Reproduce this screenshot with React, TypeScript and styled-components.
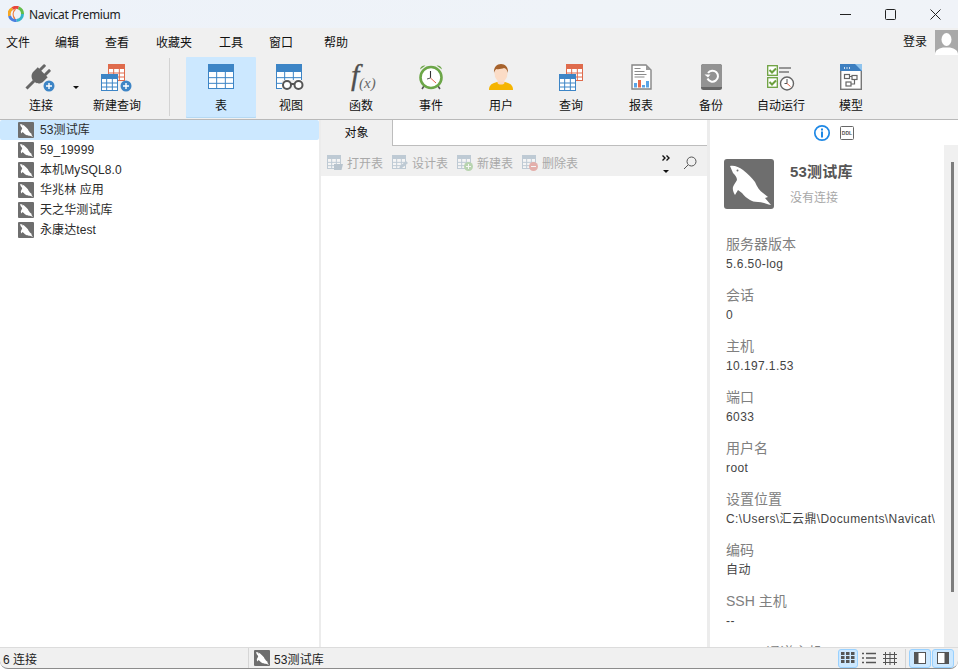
import React from "react";
import styled, { createGlobalStyle } from "styled-components";

const Global = createGlobalStyle`
  html, body { margin: 0; padding: 0; background: #fff; }
  body { font-family: "Liberation Sans", "Noto Sans CJK SC", sans-serif; font-size: 12px; color: #222; }
  * { box-sizing: border-box; }
`;
const cjk = `"Liberation Sans", "Noto Sans CJK SC", sans-serif`;

const Window = styled.div`
  width: 958px; height: 670px; display: flex; flex-direction: column; overflow: hidden;
  background: #fff; font-family: ${cjk}; padding-bottom: 1px;
`;
const TitleBar = styled.div`
  height: 28px; flex: none; display: flex; align-items: center; padding-left: 8px;
  background: linear-gradient(90deg, #edf2f9, #eff3f8 60%, #f0f3f8);
`;
const TitleText = styled.span`
  margin-left: 5px; font: 12px "Noto Sans", sans-serif; color: #222; letter-spacing: -0.35px;
`;
const WinControls = styled.div`
  margin-left: auto; display: flex; height: 28px;
`;
const WinBtn = styled.div`
  width: 45px; display: flex; align-items: center; justify-content: center;
`;
const MenuBar = styled.div`
  height: 27px; flex: none; display: flex; align-items: center; background: #f0f0f0; padding-left: 6px; position: relative;
`;
const MenuItem = styled.span<{ $w: number }>`
  width: ${p => p.$w}px; font-size: 12px; line-height: 16px; padding-top: 2px; color: #111; flex: none;
`;
const Login = styled.span`
  margin-left: auto; margin-right: 8px; font-size: 12px; line-height: 16px; color: #111;
`;
const Avatar = styled.div`
  width: 23px; height: 25px; margin-top: 2px; background: #a9a9a9; overflow: hidden; flex: none;
`;
const Toolbar = styled.div`
  height: 65px; flex: none; display: flex; align-items: stretch; padding: 2px 0 1px 6px; background: #f0f0f0;
  border-bottom: 1px solid #b9b9b9;
`;
const ToolBtn = styled.div<{ $active?: boolean }>`
  width: 70px; flex: none; display: flex; flex-direction: column; align-items: center;
  padding-top: 7px; font-size: 12px; color: #111;
  background: ${p => (p.$active ? "#cce8ff" : "transparent")};
  border-radius: 1px;
  box-shadow: ${p => (p.$active ? "inset 0 -1px 0 #b5d9f3" : "none")};
`;
const ToolIcon = styled.div`
  height: 30px; display: flex; align-items: flex-start; justify-content: center;
`;
const ToolLabel = styled.span`
  margin-top: 4px; line-height: 16px; white-space: nowrap;
`;
const Caret = styled.div`
  width: 6px; flex: none; display: flex; align-items: center; justify-content: center; padding-top: 0;
  margin-left: -3px; margin-right: 3px;
  &::after { content: ""; border: 3px solid transparent; border-top: 3px solid #111; border-bottom: 0; }
`;
const ToolSep = styled.div`
  width: 1px; background: #d3d3d3; margin: 1px 16px 2px 17px; flex: none;
`;
const Main = styled.div`
  flex: 1; min-height: 0; display: flex; background: #fff;
`;
const TreePane = styled.div`
  width: 319px; flex: none; background: #fff; padding: 0;
`;
const TreeRow = styled.div<{ $sel?: boolean }>`
  height: 20px; display: flex; align-items: center; padding-left: 18px; gap: 6px;
  font-size: 12px; line-height: 16px; color: #2b2b2b; border-radius: 2px; letter-spacing: .1px;
  background: ${p => (p.$sel ? "#cce8ff" : "transparent")};
`;
const TreeText = styled.span`
  margin-top: -1px;
`;
const Splitter = styled.div`
  width: 2px; flex: none; background: #ececec;
`;
const Middle = styled.div`
  width: 386px; flex: none; display: flex; flex-direction: column; background: #fff;
`;
const TabRow = styled.div`
  height: 26px; flex: none; display: flex; background: #f0f0f0;
`;
const Tab = styled.div`
  width: 71px; display: flex; align-items: center; justify-content: center; font-size: 12px; line-height: 16px; color: #111;
`;
const TabFill = styled.div`
  flex: 1; background: #fff; border-left: 1px solid #bdbdbd; border-bottom: 1px solid #bdbdbd;
`;
const ActionBar = styled.div`
  height: 30px; flex: none; display: flex; align-items: center; background: #f0f0f0; padding: 4px 0 0 6px;
`;
const Action = styled.div`
  width: 65px; flex: none; display: flex; align-items: center; gap: 4px; font-size: 12px; line-height: 16px; color: #a9a9a9; padding-top: 2px;
`;
const ActionRight = styled.div`
  margin-left: auto; display: flex; align-items: center; padding-right: 10px; gap: 13px;
`;
const More = styled.div`
  width: 8px; height: 26px; display: flex; flex-direction: column; align-items: center; justify-content: space-between; padding: 5px 0 3px;
  &::after { content: ""; border: 3px solid transparent; border-top: 3px solid #111; border-bottom: 0; }
`;
const MidBody = styled.div`
  flex: 1; background: #fff;
`;
const InfoPane = styled.div`
  flex: 1; min-width: 0; display: flex; flex-direction: column; background: #fff; border-left: 3px solid #ececec;
`;
const InfoTabs = styled.div`
  height: 25px; flex: none; display: flex; align-items: center; padding-left: 103px; gap: 9px;
`;
const InfoBody = styled.div`
  flex: 1; min-height: 0; display: flex;
`;
const InfoScroll = styled.div`
  flex: 1; min-width: 0; overflow: hidden; padding: 14px 9px 0 14px;
`;
const Scrollbar = styled.div`
  width: 14px; flex: none; background: #f0f0f0; display: flex; justify-content: center; padding-top: 17px;
`;
const Thumb = styled.div`
  width: 3px; height: 430px; background: #7d7d7d; margin-left: 2px;
`;
const Head = styled.div`
  display: flex; align-items: center; gap: 16px; margin-bottom: 25px;
`;
const HeadText = styled.div`
  display: flex; flex-direction: column; gap: 8px;
`;
const HeadName = styled.div`
  font-size: 15px; font-weight: 700; color: #555; line-height: 20px; letter-spacing: .2px;
`;
const HeadState = styled.div`
  font-size: 12px; color: #a8a8a8; line-height: 16px;
`;
const Field = styled.div`
  height: 51px; margin-left: 2px; white-space: nowrap; overflow: hidden;
`;
const FieldLabel = styled.div`
  font-size: 14px; line-height: 20px; height: 21px; color: #808080;
`;
const FieldValue = styled.div`
  font-size: 12px; line-height: 19px; height: 19px; color: #444; letter-spacing: .4px;
`;
const StatusBar = styled.div`
  height: 22px; flex: none; display: flex; align-items: center; background: #f0f0f0;
  border-top: 1px solid #dcdcdc; border-bottom: 1px solid #8c8c8c; border-radius: 0 0 8px 8px;
  font-size: 12px; line-height: 16px; color: #222;
`;
const StatusLeft = styled.div`
  width: 249px; padding-left: 3px; height: 100%; display: flex; align-items: center; border-right: 1px solid #d6d6d6; flex: none;
`;
const StatusText = styled.span`
  margin-top: 4px;
`;
const StatusDb = styled.div`
  display: flex; align-items: center; gap: 4px; padding-left: 5px; letter-spacing: .1px;
`;
const StatusRight = styled.div`
  margin-left: auto; display: flex; align-items: center; height: 100%; padding-right: 3px;
`;
const ViewBtn = styled.div<{ $on?: boolean; $w: number }>`
  width: ${p => p.$w}px; height: 19px; display: flex; align-items: center; justify-content: center; border-radius: 3px;
  margin-right: 1px;
  background: ${p => (p.$on ? "#cce8ff" : "transparent")};
  border: 1px solid ${p => (p.$on ? "#99d1ff" : "transparent")};
`;
const StatusSep = styled.div`
  width: 1px; height: 19px; background: #d3d3d3; margin: 0 3px 0 4px;
`;

const Dolphin = ({ size }: { size: number }) => (
  <svg width={size} height={size} viewBox="0 0 50 50" style={{ flex: "none" }}>
    <rect width="50" height="50" rx="3" fill="#6e6e6e" />
    <path fill="#fff" d="M6 7C10 6 15 8 19 11C24 15 28 19 31 23C33 28 36 32 39 34L44 38L41 39L47 46C42 45 38 43 34 43C30 43 28 42 26 41C23 39 20 37 18 34L14 31L11 36C9 33 8.500 30 9 28C10 25 12 23 13 21C13 18 11 16 9 14C8 12 7 9 6 7Z" />
    <circle cx="13.500" cy="11.500" r="1" fill="#6e6e6e" />
  </svg>
);

const grid = (x: number, y: number, w: number, h: number, c: string, head: number, cols = 3, rows = 3) => {
  const lines = [];
  const top = y + head;
  const rh = (h - head) / rows;
  const cw = w / cols;
  for (let i = 1; i < rows; i++) lines.push(<path key={"r" + i} d={`M${x} ${top + rh * i}H${x + w}`} stroke={c} />);
  for (let i = 1; i < cols; i++) lines.push(<path key={"c" + i} d={`M${x + cw * i} ${top}V${y + h}`} stroke={c} />);
  return (
    <g>
      <rect x={x + 0.5} y={y + 0.5} width={w - 1} height={h - 1} fill="#fff" stroke={c} />
      {lines}
      <path d={`M${x} ${y + head}V${y + 2}a2 2 0 0 1 2-2H${x + w - 2}a2 2 0 0 1 2 2V${y + head}Z`} fill={c} />
    </g>
  );
};
const plus = (cx: number, cy: number) => (
  <g>
    <circle cx={cx} cy={cy} r="5.500" fill="#3d85c6" />
    <path d={`M${cx - 3} ${cy}H${cx + 3}M${cx} ${cy - 3}V${cy + 3}`} stroke="#fff" strokeWidth="1.400" />
  </g>
);

const Logo = () => (
  <svg width="16" height="16" viewBox="0 0 16 16">
    <path d="M1.500 10A6.500 6.500 0 0 1 4.500 2.500" fill="none" stroke="#f5a623" strokeWidth="3" />
    <path d="M4.500 2.500A6.500 6.500 0 0 1 10.500 1.800" fill="none" stroke="#e8453c" strokeWidth="3" />
    <path d="M10.500 1.800A6.500 6.500 0 0 1 14.500 8" fill="none" stroke="#62bd4a" strokeWidth="3" />
    <path d="M14.500 8A6.500 6.500 0 0 1 8.500 14.500" fill="none" stroke="#35b6c9" strokeWidth="3" />
    <path d="M8.500 14.500A6.500 6.500 0 0 1 1.500 10" fill="none" stroke="#4a7fe0" strokeWidth="3" />
    <path d="M7.500 3C4.500 6 4.500 10 7 13" fill="none" stroke="#ef7a3c" strokeWidth="1.300" />
  </svg>
);

const IConnect = () => (
  <svg width="32" height="28" viewBox="0 0 32 28">
    <g transform="translate(13.500 12.500) rotate(45)" fill="#666">
      <rect x="-5" y="-13" width="3" height="8" rx="1" />
      <rect x="2" y="-13" width="3" height="8" rx="1" />
      <path d="M-7 -6H7V0C7 4 4 6 2 6.500H-2C-4 6 -7 4 -7 0Z" />
      <rect x="-1.500" y="6" width="3" height="11" />
    </g>
    {plus(24, 22)}
  </svg>
);
const INewQuery = () => (
  <svg width="32" height="28" viewBox="0 0 32 28">
    {grid(7, 0, 17, 17, "#df6b4c", 5)}
    {grid(0, 10, 17, 17, "#3d85c6", 5)}
    {plus(25, 22)}
  </svg>
);
const ITable = () => <svg width="26" height="26" viewBox="0 0 26 26">{grid(0, 0, 26, 25, "#3d85c6", 8)}</svg>;
const IView = () => (
  <svg width="30" height="27" viewBox="0 0 30 27">
    {grid(0, 0, 26, 25, "#3d85c6", 8)}
    <rect x="6" y="16" width="24" height="11" fill="#f0f0f0" />
    <circle cx="11" cy="21" r="4" fill="#fff" stroke="#555" strokeWidth="2" />
    <circle cx="22.500" cy="21" r="4" fill="#fff" stroke="#555" strokeWidth="2" />
    <path d="M14.500 20h4.500" stroke="#555" strokeWidth="2" />
  </svg>
);
const IFx = () => (
  <svg width="30" height="28" viewBox="0 0 30 28" style={{ overflow: "visible" }}>
    <text x="5" y="21" fontFamily="Liberation Serif" fontStyle="italic" fontSize="30" fill="#4f4f4f" stroke="#4f4f4f" strokeWidth=".3">f</text>
    <text x="13" y="24" fontFamily="Liberation Serif" fontStyle="italic" fontSize="15" fill="#666">(x)</text>
  </svg>
);
const IClock = () => (
  <svg width="26" height="26" viewBox="0 0 26 26">
    <path d="M2 5.500C2.500 2.500 5 1 7.500 1.500zM24 5.500C23.500 2.500 21 1 18.500 1.500z" fill="#6ca648" />
    <path d="M6 22l-2 3M20 22l2 3" stroke="#555" strokeWidth="1.600" />
    <circle cx="13" cy="13.500" r="10.500" fill="#fff" stroke="#6ca648" strokeWidth="2.600" />
    <path d="M12.500 7v7" stroke="#333" strokeWidth="1.100" />
    <path d="M12.500 14L18 19" stroke="#e8604c" strokeWidth="1" />
    <path d="M12.500 14L9 15" stroke="#555" strokeWidth="1" />
  </svg>
);
const IUser = () => (
  <svg width="24" height="26" viewBox="0 0 24 26">
    <path d="M0 26c0-4 2-6 5-7l3-1h8l3 1c3 1 5 3 5 7z" fill="#f5b400" />
    <path d="M8.500 15h7v4c-1 2-6 2-7 0z" fill="#fbd9c0" />
    <ellipse cx="12" cy="9.500" rx="6.500" ry="8" fill="#fbdcc6" />
    <path d="M5 9C4.500 3 8 0 12 0s7.500 3 7 9c-1-3-2-4.500-4-5-2 1-6 1.500-7.500 1C6 6 5.500 7 5 9z" fill="#a6622c" />
  </svg>
);
const IQuery = () => (
  <svg width="24" height="27" viewBox="0 0 24 27">
    {grid(7, 0, 17, 17, "#df6b4c", 5)}
    {grid(0, 10, 17, 17, "#3d85c6", 5)}
  </svg>
);
const IReport = () => (
  <svg width="21" height="26" viewBox="0 0 21 26">
    <path d="M1 1h14l5 5v19H1z" fill="#fff" stroke="#858585" strokeWidth="1.400" />
    <path d="M15 1l5 5h-5z" fill="#9a9a9a" />
    <path d="M3.500 4.500h6M3.500 7.500h10M3.500 10.500h12M3.500 13h10" stroke="#8a8a8a" strokeWidth="1.100" />
    <rect x="3" y="19" width="3" height="4.500" fill="#5aa4e6" />
    <rect x="7" y="16" width="3" height="7.500" fill="#e8694a" />
    <rect x="11" y="21" width="3" height="2.500" fill="#5aa4e6" />
    <rect x="15" y="17" width="3" height="6.500" fill="#5aa4e6" />
  </svg>
);
const IBackup = () => (
  <svg width="21" height="26" viewBox="0 0 21 26">
    <rect width="21" height="26" rx="2.500" fill="#666" />
    <path d="M0 2.500A2.500 2.500 0 0 1 2.500 0h16A2.500 2.500 0 0 1 21 2.500V23H0z" fill="#939393" />
    <path d="M7 9a5.500 5.500 0 1 1 -.5 5.500" fill="none" stroke="#fff" strokeWidth="2" />
    <path d="M3.500 10.500h6L7 13.500z" fill="#fff" />
  </svg>
);
const IAuto = () => (
  <svg width="28" height="27" viewBox="0 0 28 27">
    {[1, 13].map(y => (
      <g key={y}>
        <rect x=".7" y={y + 0.7} width="9.600" height="9.600" fill="#fff" stroke="#6ca03e" strokeWidth="1.300" />
        <path d={`M2.500 ${y + 5}l2.500 2.500 4-4`} fill="none" stroke="#6ca03e" strokeWidth="2" />
      </g>
    ))}
    <path d="M12 4h12M12 8h10" stroke="#969696" strokeWidth="2" />
    <circle cx="20" cy="19.500" r="6.500" fill="#fff" stroke="#666" strokeWidth="1.400" />
    <path d="M20 15v4.500M20 19.500l-2.500 0" stroke="#555" />
    <path d="M20 19.500l3.500 3" stroke="#e8694a" />
  </svg>
);
const IModel = () => (
  <svg width="22" height="26" viewBox="0 0 22 26">
    <rect x=".7" y=".7" width="20.600" height="24.600" fill="#fff" stroke="#777" strokeWidth="1.400" />
    <rect width="22" height="7" fill="#3d7fc0" />
    <path d="M15 0h7v7z" fill="#8fc4ee" />
    <path d="M4 4h1M6.500 4h1M9 4h1" stroke="#fff" strokeWidth="1.300" />
    <g fill="none" stroke="#666" strokeWidth="1.200">
      <rect x="4.500" y="10.500" width="5" height="4" />
      <rect x="12" y="11.500" width="5" height="4" />
      <rect x="6" y="18" width="5" height="4" />
      <path d="M9.500 12.500H12M14.500 15.500V20H11" />
    </g>
  </svg>
);

const IconAct = ({ kind }: { kind: string }) => (
  <svg width="16" height="16" viewBox="0 0 16 16" opacity=".38" style={{ marginTop: -2 }}>
    {grid(0, 0, 14, 14, "#6f8fa9", 4, 3, 3)}
    {kind === "open" && <path d="M7 9h9l-1.500 6H7z" fill="#5f7f99" />}
    {kind === "edit" && <path d="M7 14l1-3 6-5 2 2-6 5z" fill="#6f8fa9" />}
    {kind === "new" && <g><circle cx="11.500" cy="11.500" r="4.500" fill="#5fa84a" /><path d="M9 11.500h5M11.500 9v5" stroke="#fff" /></g>}
    {kind === "del" && <g><circle cx="11.500" cy="11.500" r="4.500" fill="#d0483c" /><path d="M9 11.500h5" stroke="#fff" /></g>}
  </svg>
);

const tools: [string, React.ReactNode][] = [
  ["视图", <IView />], ["函数", <IFx />], ["事件", <IClock />], ["用户", <IUser />], ["查询", <IQuery />],
  ["报表", <IReport />], ["备份", <IBackup />], ["自动运行", <IAuto />], ["模型", <IModel />],
];
const menus: [string, number][] = [["文件", 49], ["编辑", 50], ["查看", 51], ["收藏夹", 63], ["工具", 50], ["窗口", 55], ["帮助", 50]];
const conns = ["53测试库", "59_19999", "本机MySQL8.0", "华兆林 应用", "天之华测试库", "永康达test"];
const actions: [string, string][] = [["open", "打开表"], ["edit", "设计表"], ["new", "新建表"], ["del", "删除表"]];
const fields: [string, string][] = [
  ["服务器版本", "5.6.50-log"], ["会话", "0"], ["主机", "10.197.1.53"], ["端口", "6033"], ["用户名", "root"],
  ["设置位置", "C:\\Users\\汇云鼎\\Documents\\Navicat\\MySQL\\Servers"], ["编码", "自动"], ["SSH 主机", "--"], ["HTTP 通道主机", "--"],
];

export default function App() {
  return (
    <Window>
      <Global />
      <TitleBar>
        <Logo />
        <TitleText>Navicat Premium</TitleText>
        <WinControls>
          <WinBtn><svg width="11" height="11"><path d="M0 5.500h11" stroke="#222" /></svg></WinBtn>
          <WinBtn><svg width="11" height="11"><rect x=".5" y=".5" width="10" height="10" rx="1" fill="none" stroke="#222" /></svg></WinBtn>
          <WinBtn><svg width="11" height="11"><path d="M.5.500l10 10M10.500.500l-10 10" stroke="#222" /></svg></WinBtn>
        </WinControls>
      </TitleBar>
      <MenuBar>
        {menus.map(([m, w]) => <MenuItem key={m} $w={w}>{m}</MenuItem>)}
        <Login>登录</Login>
        <Avatar>
          <svg width="23" height="25" viewBox="0 0 23 25">
            <ellipse cx="11.500" cy="9.500" rx="5" ry="6.500" fill="#fff" />
            <path d="M0 25c0-5 3-6 8-7.500h7C20 19 23 20 23 25z" fill="#fff" />
          </svg>
        </Avatar>
      </MenuBar>
      <Toolbar>
        <ToolBtn><ToolIcon><IConnect /></ToolIcon><ToolLabel>连接</ToolLabel></ToolBtn>
        <Caret />
        <ToolBtn><ToolIcon><INewQuery /></ToolIcon><ToolLabel>新建查询</ToolLabel></ToolBtn>
        <ToolSep />
        <ToolBtn $active><ToolIcon><ITable /></ToolIcon><ToolLabel>表</ToolLabel></ToolBtn>
        {tools.map(([l, i]) => <ToolBtn key={l}><ToolIcon>{i}</ToolIcon><ToolLabel>{l}</ToolLabel></ToolBtn>)}
      </Toolbar>
      <Main>
        <TreePane>
          {conns.map((c, i) => <TreeRow key={c} $sel={i === 0}><Dolphin size={16} /><TreeText>{c}</TreeText></TreeRow>)}
        </TreePane>
        <Splitter />
        <Middle>
          <TabRow><Tab>对象</Tab><TabFill /></TabRow>
          <ActionBar>
            {actions.map(([k, t]) => <Action key={k}><IconAct kind={k} />{t}</Action>)}
            <ActionRight>
              <More>
                <svg width="8" height="6" viewBox="0 0 8 6"><path d="M.5.500L3 3 .5 5.500M4.500.500L7 3 4.500 5.500" fill="none" stroke="#111" strokeWidth="1.400" /></svg>
              </More>
              <svg width="14" height="14" viewBox="0 0 14 14"><circle cx="8.500" cy="5.500" r="4.500" fill="none" stroke="#555" /><path d="M5 9l-4 4" stroke="#555" /></svg>
            </ActionRight>
          </ActionBar>
          <MidBody />
        </Middle>
        <InfoPane>
          <InfoTabs>
            <svg width="18" height="18" viewBox="0 0 18 18">
              <circle cx="9" cy="9" r="7.200" fill="#fff" stroke="#1e88e5" strokeWidth="1.700" />
              <rect x="8" y="7.500" width="2" height="6" fill="#1e88e5" />
              <rect x="8" y="4.500" width="2" height="2" fill="#1e88e5" />
            </svg>
            <svg width="14" height="14" viewBox="0 0 14 14">
              <rect x=".5" y=".5" width="13" height="13" rx="1" fill="#fff" stroke="#666" />
              <text x="7" y="9" fontFamily="Liberation Sans" fontWeight="700" fontSize="5" textAnchor="middle" fill="#555">DDL</text>
            </svg>
          </InfoTabs>
          <InfoBody>
            <InfoScroll>
              <Head>
                <Dolphin size={50} />
                <HeadText>
                  <HeadName>53测试库</HeadName>
                  <HeadState>没有连接</HeadState>
                </HeadText>
              </Head>
              {fields.map(([l, v]) => (
                <Field key={l}><FieldLabel>{l}</FieldLabel><FieldValue>{v}</FieldValue></Field>
              ))}
            </InfoScroll>
            <Scrollbar><Thumb /></Scrollbar>
          </InfoBody>
        </InfoPane>
      </Main>
      <StatusBar>
        <StatusLeft><StatusText>6 连接</StatusText></StatusLeft>
        <StatusDb><Dolphin size={16} /><StatusText>53测试库</StatusText></StatusDb>
        <StatusRight>
          <ViewBtn $on $w={20}>
            <svg width="14" height="12" viewBox="0 0 14 12" fill="#555">
              {[0, 5, 10].flatMap(x => [0, 4, 8].map(y => <rect key={x + "-" + y} x={x} y={y} width="3.500" height="3" />))}
            </svg>
          </ViewBtn>
          <ViewBtn $w={20}>
            <svg width="14" height="12" viewBox="0 0 14 12"><path d="M0 1.500h2M4 1.500h10M0 6h2M4 6h10M0 10.500h2M4 10.500h10" stroke="#555" strokeWidth="1.400" /></svg>
          </ViewBtn>
          <ViewBtn $w={20}>
            <svg width="14" height="13" viewBox="0 0 14 13"><path d="M0 2.500h14M0 6.500h14M0 10.500h14M2.500 0v13M7 0v13M11.500 0v13" stroke="#555" /></svg>
          </ViewBtn>
          <StatusSep />
          <ViewBtn $on $w={22}>
            <svg width="12" height="12" viewBox="0 0 12 12"><rect x=".5" y=".5" width="11" height="11" fill="#fff" stroke="#555" /><rect x="0" y="0" width="4.500" height="12" fill="#555" /></svg>
          </ViewBtn>
          <ViewBtn $on $w={22}>
            <svg width="12" height="12" viewBox="0 0 12 12"><rect x=".5" y=".5" width="11" height="11" fill="#fff" stroke="#555" /><rect x="7.500" y="0" width="4.500" height="12" fill="#555" /></svg>
          </ViewBtn>
        </StatusRight>
      </StatusBar>
    </Window>
  );
}
